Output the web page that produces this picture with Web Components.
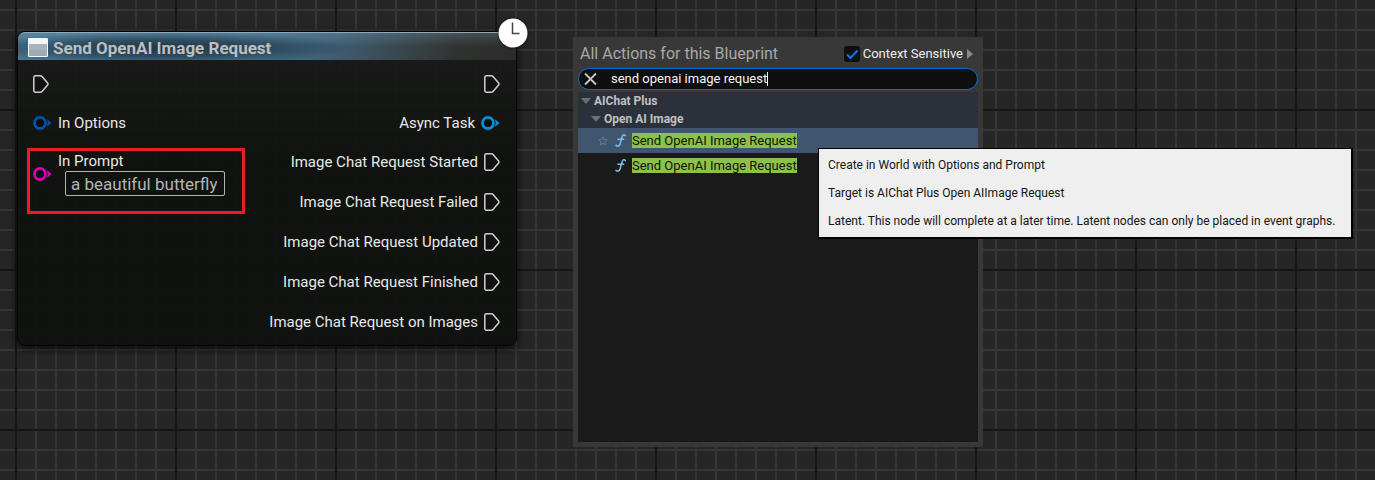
<!DOCTYPE html>
<html lang="en">
<head>
<meta charset="utf-8">
<title>Blueprint Graph</title>
<style>
html, body { margin: 0; min-height: 100%; }
body { font-family: Roboto, "Liberation Sans", sans-serif; background: #262626; }
</style>
</head>
<body>
<graph-canvas>
  <graph-node heading="Send OpenAI Image Request">
    <node-pin slot="in" kind="exec"></node-pin>
    <node-pin slot="in" kind="data" color="#0550ad">In Options</node-pin>
    <prompt-pin slot="in" label="In Prompt" value="a beautiful butterfly"></prompt-pin>
    <node-pin slot="out" kind="exec" side="out"></node-pin>
    <node-pin slot="out" kind="data" side="out" color="#0a8ed6">Async Task</node-pin>
    <node-pin slot="out" kind="exec" side="out">Image Chat Request Started</node-pin>
    <node-pin slot="out" kind="exec" side="out">Image Chat Request Failed</node-pin>
    <node-pin slot="out" kind="exec" side="out">Image Chat Request Updated</node-pin>
    <node-pin slot="out" kind="exec" side="out">Image Chat Request Finished</node-pin>
    <node-pin slot="out" kind="exec" side="out">Image Chat Request on Images</node-pin>
  </graph-node>
  <action-menu heading="All Actions for this Blueprint" query="send openai image request">
    <action-group level="1">AIChat Plus</action-group>
    <action-group level="2">Open AI Image</action-group>
    <action-item selected>Send OpenAI Image Request</action-item>
    <action-item>Send OpenAI Image Request</action-item>
  </action-menu>
  <tool-tip>
    <p>Create in World with Options and Prompt</p>
    <p>Target is AIChat Plus Open AIImage Request</p>
    <p>Latent. This node will complete at a later time. Latent nodes can only be placed in event graphs.</p>
  </tool-tip>
</graph-canvas>

<script>
class Base extends HTMLElement {
  constructor() {
    super();
    this.attachShadow({ mode: 'open' }).innerHTML =
      '<style>*{box-sizing:border-box}button,input{font:inherit;color:inherit;margin:0}button{background:none;border:0;padding:0;text-align:left}svg{display:block;flex:none}</style>' + this.render();
  }
  attr(name) { return this.getAttribute(name) || ''; }
}

customElements.define('graph-canvas', class extends Base {
  render() {
    return `<style>
      :host {
        display: block; position: relative; min-height: 100vh; overflow: hidden; background-color: #262626;
        background-image:
          linear-gradient(90deg, #161616 2px, transparent 2px),
          linear-gradient(#161616 2px, transparent 2px),
          linear-gradient(90deg, #353535 2px, transparent 2px),
          linear-gradient(#353535 2px, transparent 2px);
        background-size: 160px 160px, 160px 160px, 20px 20px, 20px 20px;
        background-position: 15px 109px, 15px 109px, 15px 9px, 15px 9px;
      }
      ::slotted(*) { position: absolute; }
      ::slotted(graph-node) { left: 17px; top: 31px; }
      ::slotted(action-menu) { left: 573px; top: 37px; }
      ::slotted(tool-tip) { left: 818px; top: 148px; }
    </style><slot></slot>`;
  }
});

customElements.define('graph-node', class extends Base {
  render() {
    return `<style>
      :host {
        display: block; width: 500px; border-radius: 8px; border: 1px solid #050505;
        background: linear-gradient(rgba(26,27,26,.9), rgba(14,17,14,.93) 40%);
        box-shadow: 0 3px 8px 1px rgba(0,0,0,.6);
        box-sizing: border-box; font-size: 15px; line-height: 20px; color: #e8e8e8;
      }
      header {
        display: flex; align-items: center; gap: 5px; height: 28px; padding: 2px 10px 0;
        border-radius: 7px 7px 0 0; border-top: 1px solid #8fa9b8;
        background:
          radial-gradient(ellipse 190px 16px at 145px 15px, rgba(22,40,52,.8), rgba(22,40,52,.55) 50%, transparent),
          linear-gradient(rgba(130,170,195,.25), transparent 50%),
          linear-gradient(100deg, #4a7692 0%, #46718c 45%, #3f6076 62%, #3a4a52 75%, #303230 88%, #2a2b2a 100%);
      }
      h2 { margin: 0; font-size: 17px; line-height: 20px; font-weight: 700; color: #bcbfc0; }
      .cols { display: flex; justify-content: space-between; padding: 4px 16px 3px 15px; }
      .clock { position: absolute; right: -12px; top: -14px; filter: drop-shadow(0 0 1px #000); }
    </style>
    <header>
      <svg width="20" height="19" viewBox="0 0 20 19"><rect width="20" height="19" rx="1" fill="#f4f7f8"/><path d="M1 6h18v12H1z" fill="#9dabb3"/><path d="M1 6h18v6H1z" fill="#a9b4ba"/></svg>
      <h2>${this.attr('heading')}</h2>
    </header>
    <div class="cols"><div><slot name="in"></slot></div><div><slot name="out"></slot></div></div>
    <svg class="clock" width="30" height="30" viewBox="0 0 30 30"><circle cx="15" cy="15" r="14.5" fill="#fff"/><path d="M14.500 4.500v11h7" fill="none" stroke="#444" stroke-width="1.500"/></svg>`;
  }
});

const dataPin = c => `<svg width="19" height="14" viewBox="0 0 19 14"><circle cx="7" cy="7" r="5.5" fill="#0a0d0f" stroke="${c}" stroke-width="2.800"/><path d="M13.900 3.200L18.600 7l-4.700 3.800q1.600-3.800 0-7.600z" fill="${c}"/></svg>`;

customElements.define('node-pin', class extends Base {
  render() {
    const exec = this.attr('kind') === 'exec', out = this.attr('side') === 'out';
    const icon = exec
      ? '<svg width="16" height="18" viewBox="0 0 16 18"><path d="M2.600.8h4.600c.8 0 1.300.2 1.800.8l5.600 6.500c.5.6.5 1.200 0 1.800L9 16.400c-.5.6-1 .8-1.800.8H2.600c-1.100 0-1.800-.6-1.800-1.600V2.400C.8 1.400 1.500.8 2.600.8z" fill="#111" stroke="#d0d0d0" stroke-width="1.500"/></svg>'
      : dataPin(this.attr('color'));
    return `<style>
      :host { display: flex; align-items: center; height: ${exec ? 40 : 38}px; gap: 6px; ${out ? 'flex-direction: row-reverse;' : ''} }
    </style>${icon}<span><slot></slot></span>`;
  }
});

customElements.define('prompt-pin', class extends Base {
  render() {
    return `<style>
      :host { display: flex; position: relative; align-items: center; gap: 6px; padding-top: 9px; }
      label, input { display: block; }
      input {
        field-sizing: content; margin-left: 7px; height: 25px; padding: 0 7px 0 5px;
        font-size: 17px; color: #b4b4b4; background: #101210; border: 1px solid #b4b4b4; border-radius: 2px;
      }
      .mark { position: absolute; left: -6px; top: 6px; width: 218px; height: 66px; border: 3px solid #ed1c24; pointer-events: none; }
    </style>
    ${dataPin('#d800b4')}
    <div><label for="v">${this.attr('label')}</label><input id="v" value="${this.attr('value')}"></div>
    <div class="mark"></div>`;
  }
});

customElements.define('action-menu', class extends Base {
  render() {
    return `<style>
      :host { display: flex; flex-direction: column; width: 410px; height: 410px; padding: 0 5px 5px; background: #383838; box-sizing: border-box; font-size: 13px; line-height: 16px; color: #c0c0c0; }
      header { display: flex; align-items: center; height: 31px; padding: 2px 5px 0 2px; }
      h2 { flex: 1; margin: 0; font-size: 16px; line-height: 20px; font-weight: 400; color: #a8a8a8; }
      label { display: flex; align-items: center; gap: 3px; color: #f0f0f0; }
      .box { appearance: none; width: 16px; height: 16px; border-radius: 3px; display: block; background: #0f0f0f url('data:image/svg+xml,<svg xmlns="http://www.w3.org/2000/svg" viewBox="0 0 16 16"><path d="M3 8.500l3.500 3.500L13.500 4.500" fill="none" stroke="%230a74e8" stroke-width="2"/></svg>'); }
      .more { margin-left: 4px; }
      .search { display: flex; align-items: center; height: 22px; border: 1px solid #0b6ad4; border-radius: 11px; background: #0f0f0f; padding: 0 5px; color: #f4f4f4; }
      .search input { field-sizing: content; margin-left: 14px; padding: 0; border: 0; outline: 0; background: none; caret-color: transparent; }
      .caret { width: 1px; height: 14px; background: #fff; }
      .list { flex: 1; margin-top: 2px; background: #1a1a1a; }
    </style>
    <header><h2>${this.attr('heading')}</h2>
      <label><input class="box" type="checkbox" checked>Context Sensitive</label>
      <button class="more" aria-label="More options"><svg width="6" height="10"><path d="M0 0l6 5-6 5z" fill="#8a8a8a"/></svg></button>
    </header>
    <div class="search">
      <button aria-label="Clear search"><svg width="13" height="14" viewBox="0 0 13 14"><path d="M1 1.500l11 11M12 1.500l-11 11" stroke="#c8c8c8" stroke-width="1.800"/></svg></button>
      <input aria-label="Search actions" value="${this.attr('query')}"><span class="caret"></span>
    </div>
    <div class="list"><slot></slot></div>`;
  }
});

customElements.define('action-group', class extends Base {
  render() {
    return `<style>
      :host { display: block; background: #2b313a; }
      button { display: flex; align-items: center; gap: 3px; width: 100%; height: 18px; padding-left: ${this.attr('level') === '2' ? 13 : 3}px; font-weight: 700; font-size: 12px; }
    </style><button><svg width="10" height="6"><path d="M0 0h10L5 6z" fill="#6c7074"/></svg><span><slot></slot></span></button>`;
  }
});

customElements.define('action-item', class extends Base {
  render() {
    const on = this.hasAttribute('selected');
    return `<style>
      :host { display: block; background: ${on ? '#40566e' : '#1a1a1a'}; }
      button { display: flex; align-items: center; width: 100%; height: 25px; padding-left: 20px; }
      .star { visibility: ${on ? 'visible' : 'hidden'}; }
      .fn { margin: 0 6px 0 7px; }
      mark { background: #8bc24a; color: #10140c; line-height: 15px; display: block; }
    </style><button>
      <svg class="star" width="10" height="10" viewBox="0 0 10 10"><path d="M5 .8l1.200 2.900 3.100.2-2.400 2 .8 3L5 7.300 2.300 8.900l.8-3-2.400-2 3.100-.2z" fill="none" stroke="#71869b" stroke-width=".8"/></svg>
      <svg class="fn" width="11" height="13" viewBox="0 0 11 13"><path d="M10.300 1.600C9.600.4 7.800.5 7.200 2.500L5 10.200C4.500 12 2.300 12.600 1 11.400M3 5.300h5.600" fill="none" stroke="#79c0f2" stroke-width="1.500" stroke-linecap="round"/></svg>
      <mark><slot></slot></mark></button>`;
  }
});

customElements.define('tool-tip', class extends Base {
  render() {
    return `<style>
      :host { display: flex; flex-direction: column; gap: 12px; padding: 8px 16px 8px 9px; background: #efefef; border: 1px solid #000; border-right-width: 2px; border-bottom-width: 2px; font-size: 12px; line-height: 16px; color: #141414; white-space: nowrap; }
      ::slotted(p) { margin: 0; }
    </style><slot></slot>`;
  }
});
</script>
</body>
</html>
